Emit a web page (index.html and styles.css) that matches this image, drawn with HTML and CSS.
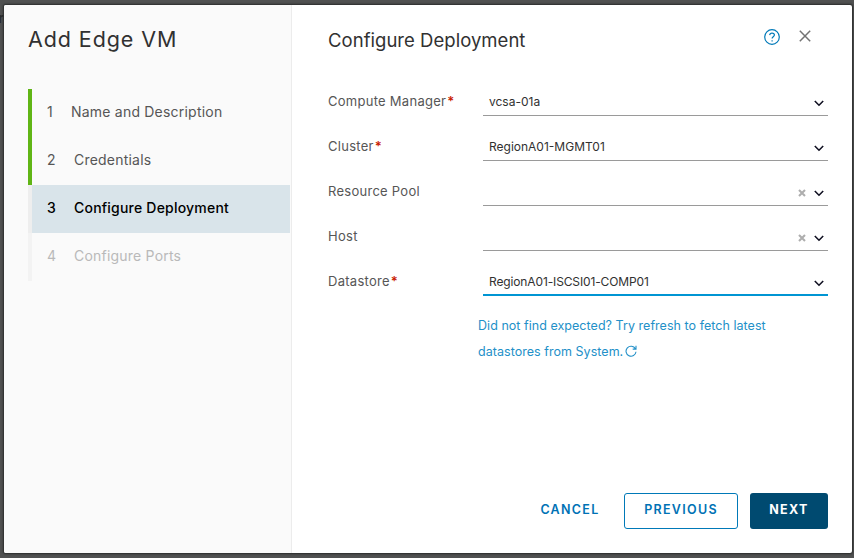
FILE: index.html
```html
<!DOCTYPE html>
<html lang="en">
<head>
<meta charset="utf-8">
<title>Add Edge VM</title>
<link rel="stylesheet" href="styles.css">
</head>
<body>
<svg class="symbols" aria-hidden="true">
  <symbol id="chevron" viewBox="0 0 10 7"><path d="M.8 1 5 5.2 9.2 1" fill="none" stroke="#111122" stroke-width="1.6"/></symbol>
  <symbol id="clear" viewBox="0 0 8 8"><path d="m1 1 6 6m0-6L1 7" fill="none" stroke="#aeaeae" stroke-width="2.1"/></symbol>
</svg>
<div class="backdrop-text" aria-hidden="true">r</div>
<div class="modal">
  <aside class="sidebar">
    <h1 class="title">Add Edge VM</h1>
    <ol class="steps">
      <li class="step done"><span class="num">1</span><span class="name first">Name and Description</span></li>
      <li class="step done"><span class="num">2</span><span class="name">Credentials</span></li>
      <li class="step active"><span class="num">3</span><span class="name">Configure Deployment</span></li>
      <li class="step disabled"><span class="num">4</span><span class="name">Configure Ports</span></li>
    </ol>
  </aside>
  <main class="main">
    <header class="header">
      <h2 class="heading">Configure Deployment</h2>
      <svg class="help" viewBox="0 0 16 16"><circle cx="8" cy="8" r="7.3"/><path d="M5.7 6.1C5.8 4.8 6.7 4.1 8 4.1c1.4 0 2.4.8 2.4 2 0 1.7-2.3 1.7-2.3 3.4M8.1 11.2v1.2"/></svg>
      <svg class="close" viewBox="0 0 12 12"><path d="m.8.8 10.4 10.4m0-10.4L.8 11.2"/></svg>
    </header>
    <div class="form">
      <div class="row"><label class="label">Compute Manager<b class="req">*</b></label><div class="select"><span class="value">vcsa-01a</span><svg class="chev"><use href="#chevron"/></svg></div></div>
      <div class="row"><label class="label">Cluster<b class="req">*</b></label><div class="select"><span class="value">RegionA01-MGMT01</span><svg class="chev"><use href="#chevron"/></svg></div></div>
      <div class="row"><label class="label">Resource Pool</label><div class="select"><span class="value"></span><svg class="clear"><use href="#clear"/></svg><svg class="chev"><use href="#chevron"/></svg></div></div>
      <div class="row"><label class="label">Host</label><div class="select"><span class="value"></span><svg class="clear"><use href="#clear"/></svg><svg class="chev"><use href="#chevron"/></svg></div></div>
      <div class="row"><label class="label">Datastore<b class="req">*</b></label><div class="select focused"><span class="value long">RegionA01-ISCSI01-COMP01</span><svg class="chev"><use href="#chevron"/></svg></div></div>
    </div>
    <a class="hint">Did not find expected? Try refresh to fetch latest<br>datastores from System.<svg class="refresh" viewBox="0 0 12 12"><path d="M10.4 3.8A5 5 0 1 0 11 6.8M11 .8v3.3H7.7"/></svg></a>
    <footer class="footer">
      <button class="btn cancel">CANCEL</button>
      <button class="btn previous">PREVIOUS</button>
      <button class="btn next">NEXT</button>
    </footer>
  </main>
</div>
</body>
</html>
```

FILE: styles.css
```css
* { box-sizing: border-box; }
body {
  margin: 0;
  width: 854px;
  height: 558px;
  padding: 5px 2px 5px 4px;
  overflow: hidden;
  background: #505151;
  font-family: Inter, "Liberation Sans", sans-serif;
}
.symbols { position: absolute; width: 0; height: 0; }
.backdrop-text { position: absolute; left: -2px; top: 9px; font-size: 14px; font-weight: 700; color: #292a2a; }
.modal {
  position: relative;
  display: flex;
  width: 848px;
  height: 548px;
  background: #fff;
  border-radius: 2px;
  overflow: hidden;
  box-shadow: 0 0 2px 1px #292b2a;
}
.sidebar { width: 288px; padding: 19px 1px 0 24px; background: #fafafa; border-right: 1px solid #ececec; }
.title { margin: 0; height: 65px; font-size: 21.5px; line-height: 31px; font-weight: 400; letter-spacing: .9px; color: #313131; white-space: nowrap; }
.steps { margin: 0; padding: 0; list-style: none; }
.step {
  display: flex;
  align-items: center;
  height: 48px;
  padding: 0 0 3px 15px;
  border-left: 4px solid #f3f3f3;
  font-size: 14px;
  letter-spacing: .21px;
  color: #565656;
}
.done { border-color: #60b515; }
.active { background: #d9e4ea; background-clip: padding-box; border-color: #eee; color: #000; font-weight: 500; }
.disabled { color: #b9b9b9; }
.num { width: 27px; }
.first { margin-left: -3px; }
.main { flex: 1; display: flex; flex-direction: column; padding: 20px 24px 24px 36px; }
.header { display: flex; height: 54px; }
.heading { flex: 1; margin: 0; font-size: 18.5px; line-height: 31px; font-weight: 400; letter-spacing: .03px; color: #313131; }
.help { width: 16px; height: 16px; margin: 4px 19px 0 0; fill: none; stroke: #0079b8; stroke-width: 1.2; }
.close { width: 12px; height: 12px; margin: 5px 17px 0 0; fill: none; stroke: #737373; stroke-width: 1.5; }
.row { display: flex; height: 45px; }
.label { width: 155px; padding-top: 9px; font-size: 13px; line-height: 26px; letter-spacing: .27px; color: #565656; white-space: nowrap; }
.req { margin-left: 1px; font-weight: 600; color: #c92100; }
.select { display: flex; flex: 1; height: 37px; padding: 10px 4.5px 0 6px; border-bottom: 1px solid #9a9a9a; }
.focused { border-bottom: 2px solid #0095d3; }
.value { flex: 1; font-size: 12px; line-height: 26px; color: #313131; white-space: nowrap; }
.long { letter-spacing: -.13px; }
.chev { width: 10px; height: 7px; margin-top: 11px; }
.clear { width: 8px; height: 8px; margin: 9.5px 8px 0 0; }
.hint { margin: 9px 0 0 150px; width: 300px; font-size: 12.5px; line-height: 26px; letter-spacing: .04px; color: #2390c8; white-space: nowrap; }
.refresh { width: 12px; height: 12px; margin-left: 2px; vertical-align: -1px; fill: none; stroke: #2390c8; stroke-width: 1.1; }
.footer { display: flex; justify-content: flex-end; gap: 12px; margin-top: auto; }
.btn {
  height: 36px;
  padding: 0 0 2px;
  border: 1px solid transparent;
  border-radius: 3px;
  background: none;
  font: 600 12.5px/32px Inter, "Liberation Sans", sans-serif;
  letter-spacing: 1.3px;
  color: #0072b5;
}
.cancel { width: 84px; }
.previous { width: 114px; border-color: #0079b8; }
.next { width: 78px; background: #004a70; color: #fff; font-weight: 700; }
```
